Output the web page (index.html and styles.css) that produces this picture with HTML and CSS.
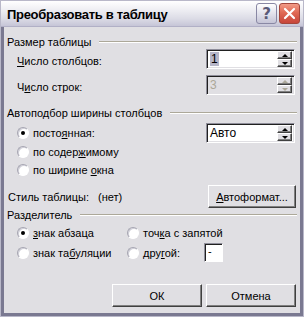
FILE: index.html
```html
<!DOCTYPE html>
<html>
<head>
<meta charset="utf-8">
<link rel="stylesheet" href="styles.css">
</head>
<body>
<div class="window">
 <div class="titlebar">
  <span class="title">Преобразовать в таблицу</span>
  <span class="tbtn help">?</span>
  <span class="tbtn close"><svg width="13" height="13" viewBox="0 0 13 13"><path d="M2 2 L11 11 M11 2 L2 11" stroke="#fff" stroke-width="2.2" stroke-linecap="round"/></svg></span>
 </div>
 <div class="client">

  <div class="ghead g1"><span>Размер таблицы</span><i class="rule"></i></div>
  <div class="row r1">
   <span class="lbl"><u>Ч</u>исло столбцов:</span>
   <div class="spin"><span class="val"><b class="sel">1</b></span><div class="arrows"><i class="up"></i><i class="dn"></i></div></div>
  </div>
  <div class="row r2">
   <span class="lbl">Ч<u>и</u>сло строк:</span>
   <div class="spin off"><span class="val">3</span><div class="arrows"><i class="up"></i><i class="dn"></i></div></div>
  </div>

  <div class="ghead g2"><span>Автоподбор ширины столбцов</span><i class="rule"></i></div>
  <div class="row r3">
   <span class="opt"><i class="radio on"></i><span>посто<u>я</u>нная:</span></span>
   <div class="spin"><span class="val">Авто</span><div class="arrows"><i class="up"></i><i class="dn"></i></div></div>
  </div>
  <div class="row r4"><span class="opt"><i class="radio"></i><span>по содер<u>ж</u>имому</span></span></div>
  <div class="row r5"><span class="opt"><i class="radio"></i><span>по ширине <u>о</u>кна</span></span></div>

  <div class="row r6">
   <span class="style-lbl">Стиль таблицы:<span class="none">(нет)</span></span>
   <span class="btn fmt"><span><u>А</u>втоформат...</span></span>
  </div>

  <div class="ghead g3"><span>Разделитель</span><i class="rule"></i></div>
  <div class="row r7">
   <span class="opt c1"><i class="radio on"></i><span><u>з</u>нак абзаца</span></span>
   <span class="opt"><i class="radio"></i><span>точ<u>к</u>а с запятой</span></span>
  </div>
  <div class="row r8">
   <span class="opt c1"><i class="radio"></i><span>знак та<u>б</u>уляции</span></span>
   <span class="opt c2"><i class="radio"></i><span>дру<u>г</u>ой:</span></span>
   <span class="other">-</span>
  </div>

  <div class="actions">
   <span class="btn ok">ОК</span>
   <span class="btn">Отмена</span>
  </div>
 </div>
</div>
</body>
</html>
```

FILE: styles.css
```css
html, body {
 margin: 0;
 padding: 0;
 background: #ffffff;
}

.window {
 width: 304px;
 height: 317px;
 box-sizing: border-box;
 background: #e0dfe3;
 border: 1px solid #b9b8c9;
 display: flex;
 flex-direction: column;
 font-family: "Liberation Sans", Arial, sans-serif;
 font-size: 11px;
 color: #000;
}

/* title bar, silver theme */
.titlebar {
 height: 25px;
 flex: none;
 display: flex;
 align-items: center;
 padding: 0 3px 0 6px;
 background: linear-gradient(#ffffff, #f1f1f5 30%, #dcdce6 70%, #c6c5d7);
 border-bottom: 1px solid #b1b0c6;
}
.title {
 flex: 1;
 font-weight: bold;
 font-size: 13px;
 letter-spacing: -0.3px;
 color: #000;
 padding-top: 1px;
}
.tbtn {
 width: 19px;
 height: 19px;
 border-radius: 3px;
 display: flex;
 align-items: center;
 justify-content: center;
 margin-left: 2px;
}
.help {
 border: 1px solid #8988a4;
 background: linear-gradient(#ffffff, #dcdce8 60%, #c5c4d6);
 color: #5a5a78;
 font: bold 15px "DejaVu Sans", sans-serif;
}
.close {
 border: 1px solid #a3463c;
 background: linear-gradient(#f29b87, #e06a55 45%, #c7453a);
}

.client {
 flex: 1;
 display: flex;
 flex-direction: column;
 border-left: 3px solid #7a7991;
 border-right: 3px solid #7a7991;
 border-bottom: 3px solid #7a7991;
 padding: 0 3px 0 3px;
}

/* group headings with etched rule */
.ghead {
 height: 14px;
 display: flex;
 align-items: center;
}
.ghead span {
 padding-right: 8px;
}
.rule {
 flex: 1;
 height: 0;
 border-top: 1px solid #aca899;
 border-bottom: 1px solid #ffffff;
}
.g1 { margin-top: 8px; }
.g2 { margin-top: 11px; }
.g3 { margin-top: 0; }

.row {
 display: flex;
 align-items: center;
 padding-left: 10px;
}
.r1, .r2 { height: 20px; justify-content: space-between; padding-right: 2px; }
.r2 { margin-top: 6px; }
.r3 { height: 20px; margin-top: 3px; justify-content: space-between; padding-right: 2px; }
.r4, .r5 { height: 18px; }
.r6 { height: 23px; margin-top: 6px; padding-left: 0; justify-content: space-between; padding-right: 1px; }
.r7 { height: 18px; margin-top: 2px; }
.r8 { height: 19px; margin-top: 1px; }

.lbl { padding-top: 3px; }

.spin {
 width: 89px;
 height: 20px;
 box-sizing: border-box;
 background: #fff;
 border: 1px solid;
 border-color: #8f8e9a #ffffff #ffffff #8f8e9a;
 box-shadow: inset 1px 1px 0 #202020, inset -1px -1px 0 #e0dfe3;
 display: flex;
 align-items: center;
 padding: 2px 2px 2px 2px;
}
.spin .val {
 flex: 1;
 padding-left: 1px;
 font-size: 12px;
}
.sel {
 display: inline-block;
 font-weight: normal;
 background: #b6b6c8;
 height: 14px;
 line-height: 14px;
 padding: 0 1px;
}
.spin.off {
 background: #e0dfe3;
 color: #aca899;
}
.arrows {
 width: 15px;
 height: 16px;
 display: flex;
 flex-direction: column;
}
.arrows i {
 flex: 1;
 background: #e0dfe3;
 border: 1px solid;
 border-color: #ffffff #404040 #404040 #ffffff;
 box-shadow: inset -1px -1px 0 #808080;
 display: flex;
 align-items: center;
 justify-content: center;
}
.arrows i::after {
 content: "";
 border-left: 3px solid transparent;
 border-right: 3px solid transparent;
}
.arrows .up::after { border-bottom: 3px solid #000; }
.arrows .dn::after { border-top: 3px solid #000; }
.spin.off .arrows .up::after { border-bottom-color: #aca899; }
.spin.off .arrows .dn::after { border-top-color: #aca899; }

.opt {
 display: flex;
 align-items: center;
}
.radio {
 width: 12px;
 height: 12px;
 box-sizing: border-box;
 border-radius: 50%;
 border: 1px solid;
 border-color: #a5a4b0 #ffffff #ffffff #a5a4b0;
 box-shadow: inset 1px 1px 0 #d0cfd8;
 background: #fff;
 margin-right: 4px;
 display: flex;
 align-items: center;
 justify-content: center;
}
.radio.on::after {
 content: "";
 width: 4px;
 height: 4px;
 border-radius: 50%;
 background: #000;
}
.c1 { width: 110px; }
.c2 { width: 77px; }

.style-lbl { padding-left: 1px; }
.none { padding-left: 9px; }

.btn {
 box-sizing: border-box;
 height: 23px;
 display: flex;
 align-items: center;
 justify-content: center;
 background: #e0dfe3;
 border: 1px solid;
 border-color: #ffffff #404040 #404040 #ffffff;
 box-shadow: inset -1px -1px 0 #808080;
}
.fmt { width: 88px; }

.other {
 width: 19px;
 height: 19px;
 box-sizing: border-box;
 background: #fff;
 border: 1px solid;
 border-color: #8f8e9a #ffffff #ffffff #8f8e9a;
 box-shadow: inset 1px 1px 0 #202020;
 padding: 1px 0 0 3px;
}

.actions {
 display: flex;
 justify-content: flex-end;
 gap: 4px;
 margin-top: 22px;
 padding-right: 1px;
}
.actions .btn { width: 90px; }
```
